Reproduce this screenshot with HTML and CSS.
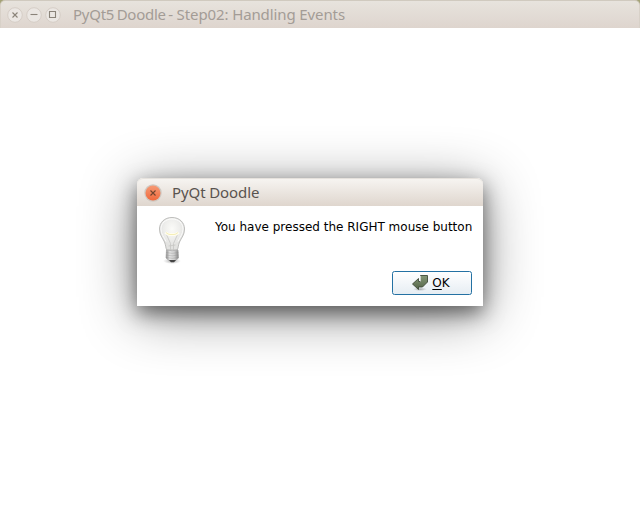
FILE: index.html
```html
<!DOCTYPE html>
<html lang="en">
<head>
<meta charset="utf-8">
<title>PyQt5 Doodle</title>
<link rel="stylesheet" href="styles.css">
</head>
<body>
<div class="window">
  <header class="titlebar">
    <div class="controls">
      <svg class="control" viewBox="0 0 16 16"><circle cx="8" cy="8" r="7.3"/><path d="M5.500 5.500l5 5M10.500 5.500l-5 5"/></svg>
      <svg class="control" viewBox="0 0 16 16"><circle cx="8" cy="8" r="7.3"/><path d="M4.500 7.500h7"/></svg>
      <svg class="control" viewBox="0 0 16 16"><circle cx="8" cy="8" r="7.3"/><path d="M4.500 4.500h6v6h-6z"/></svg>
    </div>
    <span class="title"><span class="app">PyQt5 Doodle -</span> Step02: Handling Events</span>
  </header>
</div>
<div class="dialog" role="dialog">
  <header class="dialog-bar">
    <svg class="dialog-close" viewBox="0 0 18 18">
      <defs><linearGradient id="orange" x2="0" y2="1"><stop stop-color="#f69a75"/><stop offset="1" stop-color="#f0693c"/></linearGradient></defs>
      <circle cx="9" cy="9" r="8.7" fill="#cfc8c1"/>
      <circle cx="9" cy="9" r="7.5" fill="url(#orange)"/>
      <path d="M6.500 6.500l5 5M11.500 6.500l-5 5" stroke="#70442f" stroke-width="1.1"/>
    </svg>
    <span class="dialog-title">PyQt Doodle</span>
  </header>
  <div class="dialog-body">
    <svg class="bulb" viewBox="0 0 28 48">
      <defs>
        <radialGradient id="glass" cy=".35"><stop stop-color="#fbfbf8"/><stop offset=".65" stop-color="#ededeb"/><stop offset="1" stop-color="#e2e2e0"/></radialGradient>
        <linearGradient id="metal"><stop stop-color="#8a8a8a"/><stop offset=".3" stop-color="#e4e4e4"/><stop offset=".65" stop-color="#cfcfcf"/><stop offset="1" stop-color="#888"/></linearGradient>
        <radialGradient id="shade"><stop stop-color="#777" stop-opacity=".65"/><stop offset="1" stop-color="#999" stop-opacity="0"/></radialGradient>
      </defs>
      <ellipse cx="14" cy="45" rx="9" ry="3" fill="url(#shade)"/>
      <path d="M14 1.500C6.500 1.500 1.500 6.500 1.500 13c0 6 3 8.500 5 13 1.300 3 1 5.500 2.300 8h10.400c1.300-2.500 1-5 2.300-8 2-4.500 5-7 5-13C26.500 6.500 21.500 1.500 14 1.500z" fill="url(#glass)" stroke="#bdbdbb"/>
      <path d="M14 3C7.500 3 3 7.300 3 13c0 5.500 3.200 8 5 12.500M14 3c6.500 0 11 4.300 11 10 0 5.500-3.200 8-5 12.500" fill="none" stroke="#fff" stroke-width=".8"/>
      <path d="M12.500 34v-6.500L8 17.500M15.500 34v-6.500L20 17.500M10.500 30l7-1" fill="none" stroke="#c6c6c4" stroke-width=".8"/>
      <path d="M7.500 16.500q2 2 4 2h5q2 0 4-2" fill="none" stroke="#fffdf0" stroke-width="3"/>
      <path d="M8 16.500q2 2 4 2h4q2 0 4-2" fill="none" stroke="#f3ecb0" stroke-width=".9"/>
      <path d="M8.500 34q5.500 1.500 11.500 0l.5 8-3 2.500h-6.500l-3-2.500z" fill="url(#metal)" stroke="#a5a5a5" stroke-width=".7"/>
      <path d="M8 36.500q6 1.700 12.500 0M8 39q6 1.700 12.500 0M8.300 41.500q6 1.700 12 0" fill="none" stroke="#8a8a8a" stroke-opacity=".55" stroke-width=".6"/>
      <path d="M11 44h7l-2 2.200h-3z" fill="#444"/>
    </svg>
    <p class="message">You have pressed the RIGHT mouse button</p>
  </div>
  <div class="actions">
    <button class="ok">
      <svg class="ok-icon" viewBox="0 0 16 16">
        <defs><linearGradient id="green" x2="0" y2="1"><stop stop-color="#869878"/><stop offset="1" stop-color="#536447"/></linearGradient>
        <radialGradient id="floor"><stop stop-color="#555" stop-opacity=".5"/><stop offset="1" stop-color="#777" stop-opacity="0"/></radialGradient></defs>
        <ellipse cx="8" cy="14.200" rx="7" ry="1.800" fill="url(#floor)"/>
        <path d="M8.500.5h7v6.500l-5 5H6.500v2.500L.5 9l6-5.500v3h2z" fill="url(#green)" stroke="#3e4938" stroke-width=".9"/>
        <path d="M8.500 1v5.500" stroke="#dce0da" stroke-width=".9"/>
      </svg>
      <span><span class="mnemonic">O</span>K</span>
    </button>
  </div>
</div>
</body>
</html>
```
FILE: styles.css
```css
* { box-sizing: border-box; }
body {
  margin: 0;
  height: 508px;
  overflow: hidden;
  background: #fff;
  font-family: "DejaVu Sans", sans-serif;
}
.window {
  height: 508px;
  background: linear-gradient(#a3a276, #a3a276) top / 100% 8px no-repeat, #fff;
}
.titlebar {
  display: flex;
  align-items: center;
  gap: 12px;
  height: 28px;
  padding: 1px 6px 0;
  border: 1px solid #d8d1c8;
  border-bottom: 0;
  border-top-color: #d0cabf;
  border-radius: 5px 5px 0 0;
  background: linear-gradient(#e7e3dd, #ded5ce);
}
.controls { display: flex; gap: 3px; }
.control { width: 16px; height: 16px; fill: #ebe7e3; stroke: #d5cdc6; }
.control path { fill: none; stroke: #8a8379; stroke-width: 1.1; }
.title, .dialog-title {
  margin-top: -2px;
  font-family: "Noto Sans", sans-serif;
  font-size: 15px;
  line-height: 20px;
  white-space: nowrap;
}
.title { color: #a39c96; letter-spacing: -.11px; }
.app { letter-spacing: -.25px; word-spacing: -1.200px; }
.dialog {
  position: absolute;
  left: 137px;
  top: 178px;
  width: 346px;
  height: 128px;
  border-radius: 6px 6px 0 0;
  background: #fff;
  box-shadow: 0 7px 20px rgba(0, 0, 0, .5), 0 9px 55px rgba(0, 0, 0, .45);
}
.dialog-bar {
  display: flex;
  align-items: center;
  gap: 10px;
  height: 28px;
  padding: 1px 7px 0;
  border-radius: 6px 6px 0 0;
  background: linear-gradient(#f7f5f2, #dfd6ce);
  box-shadow: inset 0 1px #e6e2dd;
}
.dialog-close { width: 18px; height: 18px; }
.dialog-title { color: #59534f; letter-spacing: -.1px; }
.dialog-body { display: flex; padding: 10px 11px 0 21px; gap: 29px; }
.bulb { width: 28px; height: 48px; flex: none; }
.message {
  margin: 3px 0 0;
  font-size: 12px;
  line-height: 16px;
  white-space: nowrap;
  color: #000;
}
.actions { display: flex; justify-content: flex-end; padding: 7px 11px 0; }
.ok {
  display: flex;
  align-items: center;
  justify-content: center;
  gap: 4px;
  width: 80px;
  height: 24px;
  padding: 0 2px 0 0;
  border: 1px solid #2471a3;
  border-radius: 2.500px;
  background: linear-gradient(#fff, #e6edf3);
  font: 12px/16px "DejaVu Sans", sans-serif;
  color: #000;
}
.ok-icon { width: 16px; height: 16px; }
.mnemonic { text-decoration: underline; text-underline-offset: 2px; text-decoration-thickness: 1px; }
```
